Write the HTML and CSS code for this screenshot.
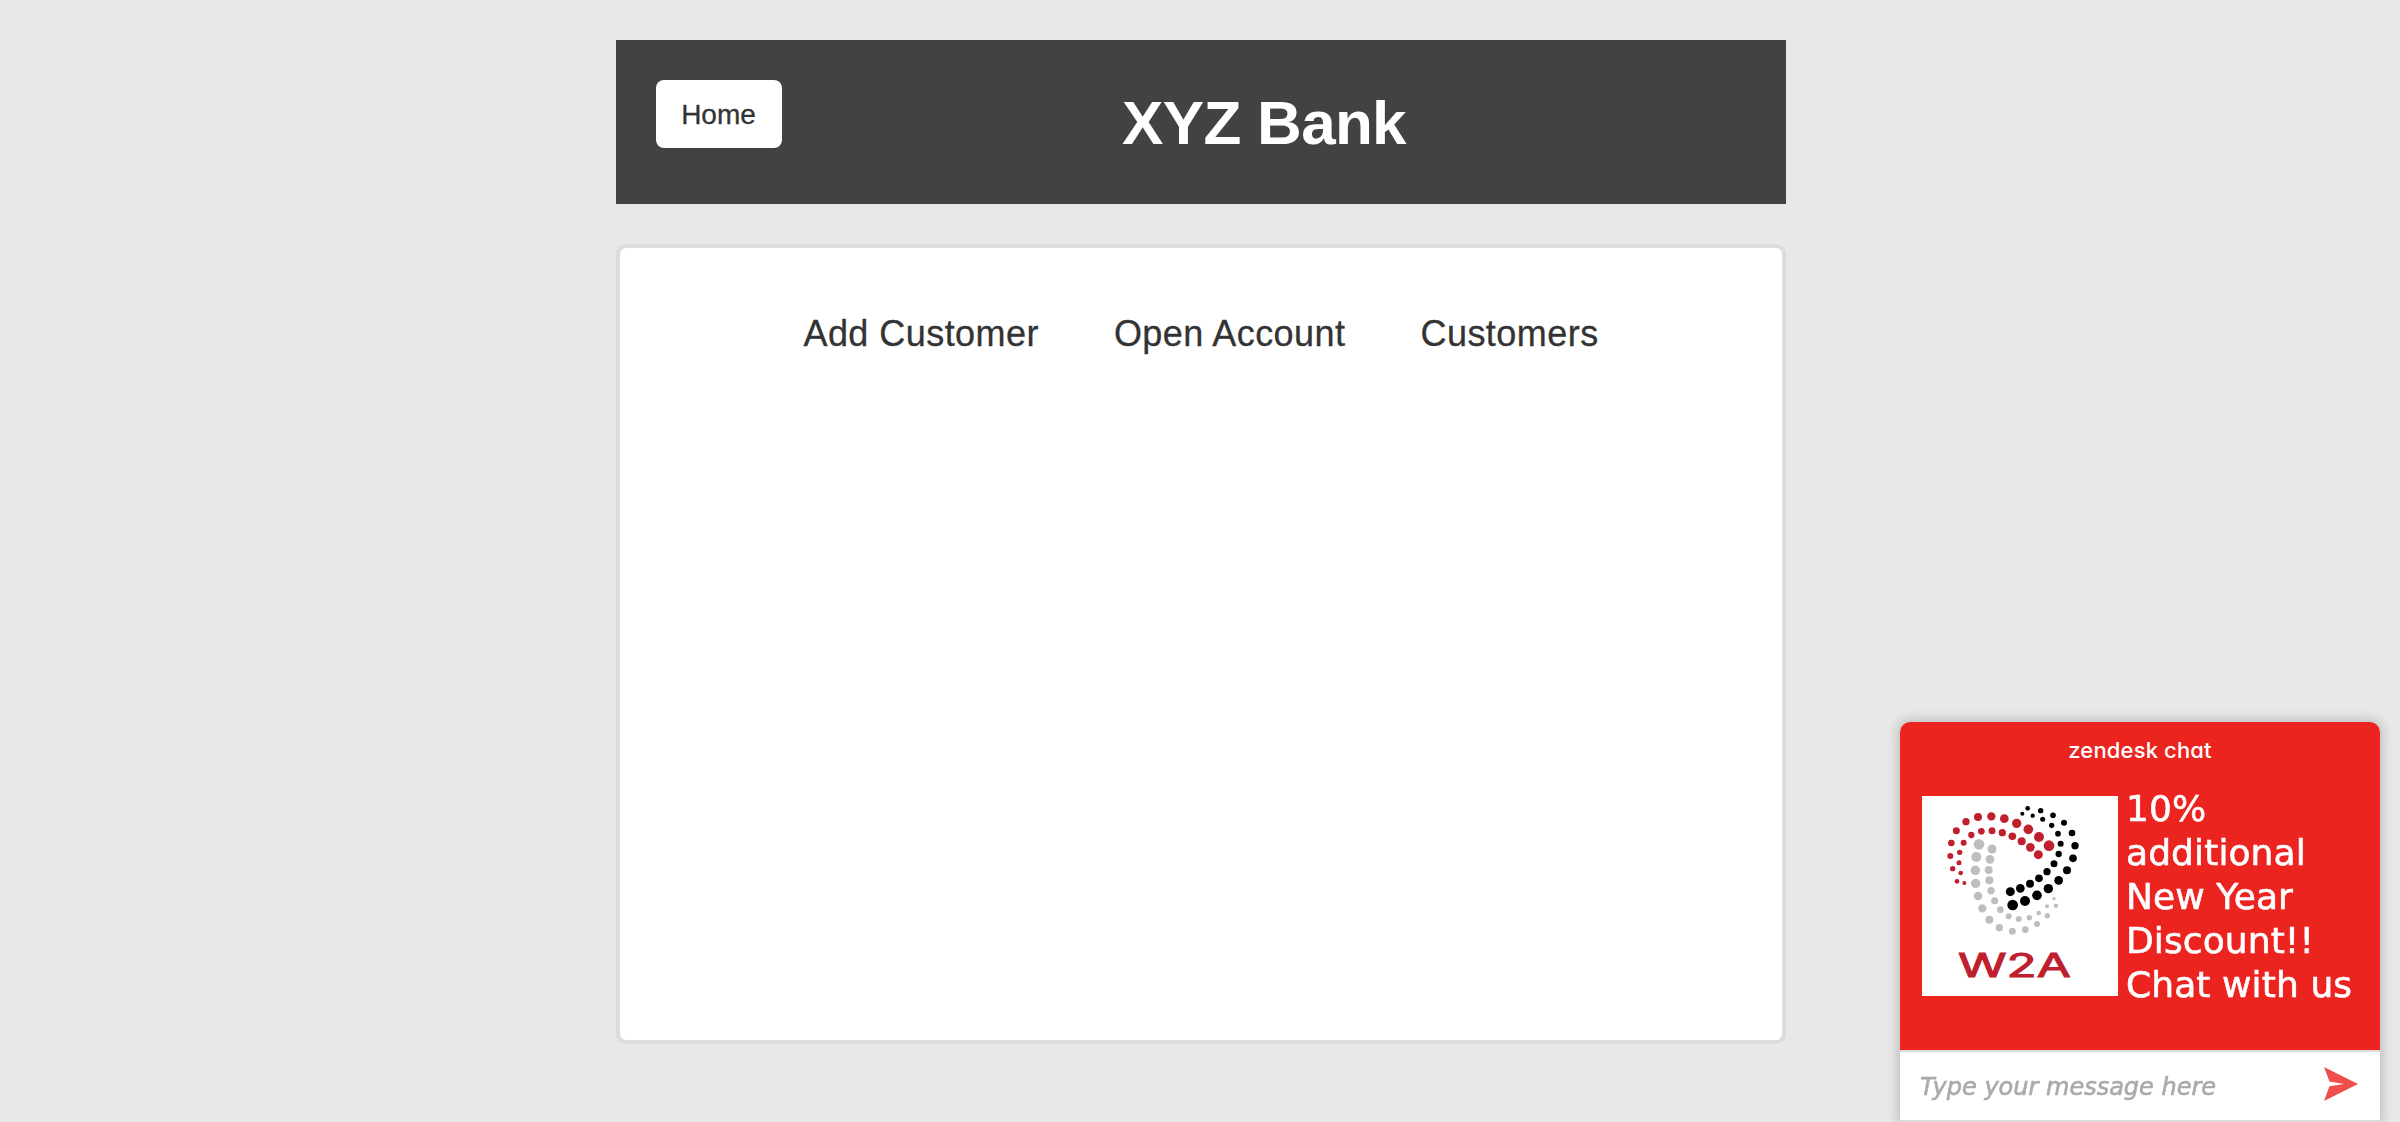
FILE: index.html
```html
<!DOCTYPE html>
<html lang="en">
<head>
<meta charset="utf-8">
<title>XYZ Bank</title>
<link rel="stylesheet" href="styles.css">
</head>
<body>
<div class="container">
  <header class="header">
    <button class="btn home" type="button">Home</button>
    <h1 class="title">XYZ Bank</h1>
  </header>
  <main class="panel">
    <nav class="tabs">
      <a class="tab add">Add Customer</a>
      <a class="tab open">Open Account</a>
      <a class="tab list">Customers</a>
    </nav>
  </main>
</div>
<aside class="chat">
  <div class="chat-top">
    <div class="brand">zendesk chat</div>
    <div class="promo">
      <svg class="logo" viewBox="36 33 588 600" aria-label="W2A">
        <g fill="#be202e">
          <circle cx="417" cy="182" r="16"/><circle cx="387" cy="156" r="15"/><circle cx="355" cy="133" r="14.5"/><circle cx="320" cy="115" r="14"/><circle cx="283" cy="101" r="13"/><circle cx="244" cy="94" r="12.5"/><circle cx="204" cy="96" r="12"/><circle cx="168" cy="110" r="11"/><circle cx="139" cy="137" r="10.5"/><circle cx="124" cy="174" r="10"/><circle cx="121" cy="213" r="9"/><circle cx="128" cy="251" r="8"/><circle cx="141" cy="289" r="7"/>
          <circle cx="385" cy="209" r="13.5"/><circle cx="361" cy="187" r="13"/><circle cx="335" cy="169" r="12"/><circle cx="307" cy="154" r="11.5"/><circle cx="277" cy="143" r="11"/><circle cx="246" cy="137" r="10.5"/><circle cx="214" cy="139" r="10"/><circle cx="184" cy="150" r="9.5"/><circle cx="161" cy="173" r="9"/><circle cx="149" cy="202" r="8"/><circle cx="147" cy="233" r="7.5"/><circle cx="152" cy="264" r="7"/><circle cx="163" cy="294" r="6"/>
        </g>
        <g fill="#000">
          <circle cx="308" cy="360" r="16"/><circle cx="345" cy="348" r="15"/><circle cx="381" cy="331" r="14.5"/><circle cx="415" cy="311" r="14"/><circle cx="446" cy="286" r="13"/><circle cx="471" cy="256" r="12"/><circle cx="489" cy="220" r="11.5"/><circle cx="495" cy="182" r="11"/><circle cx="486" cy="144" r="10"/><circle cx="462" cy="113" r="9"/><circle cx="429" cy="91" r="8.5"/><circle cx="392" cy="77" r="8"/><circle cx="353" cy="70" r="7"/>
          <circle cx="301" cy="320" r="13.5"/><circle cx="331" cy="310" r="13"/><circle cx="360" cy="296" r="12"/><circle cx="387" cy="280" r="11.5"/><circle cx="411" cy="260" r="11"/><circle cx="432" cy="236" r="10.5"/><circle cx="446" cy="207" r="9.5"/><circle cx="452" cy="176" r="9"/><circle cx="444" cy="146" r="8.5"/><circle cx="425" cy="121" r="8"/><circle cx="398" cy="103" r="7.5"/><circle cx="368" cy="92" r="6.5"/><circle cx="337" cy="86" r="6"/>
        </g>
        <g fill="#bcbec0">
          <circle cx="207" cy="178" r="16"/><circle cx="199" cy="216" r="15"/><circle cx="196" cy="256" r="14.5"/><circle cx="197" cy="295" r="14"/><circle cx="204" cy="333" r="13"/><circle cx="217" cy="370" r="12.5"/><circle cx="238" cy="404" r="12"/><circle cx="268" cy="428" r="11"/><circle cx="307" cy="439" r="10.5"/><circle cx="346" cy="434" r="10"/><circle cx="381" cy="417" r="9"/><circle cx="412" cy="392" r="8"/><circle cx="438" cy="362" r="6.5"/>
          <circle cx="246" cy="192" r="13.5"/><circle cx="240" cy="223" r="13"/><circle cx="236" cy="255" r="12"/><circle cx="238" cy="286" r="12"/><circle cx="243" cy="317" r="11"/><circle cx="254" cy="347" r="10.5"/><circle cx="271" cy="374" r="10"/><circle cx="296" cy="394" r="9"/><circle cx="326" cy="402" r="9"/><circle cx="358" cy="398" r="8"/><circle cx="386" cy="384" r="7"/><circle cx="411" cy="364" r="6"/><circle cx="432" cy="341" r="5"/>
        </g>
        <text class="logo-text" x="144" y="576" textLength="338" lengthAdjust="spacingAndGlyphs">W2A</text>
      </svg>
      <p class="offer">10% additional New Year Discount!! Chat with us</p>
    </div>
  </div>
  <div class="composer">
    <span class="hint">Type your message here</span>
    <svg class="send" viewBox="0 0 34 34" aria-hidden="true"><path fill="#ef4f4c" d="M0 0 34 17 0 34 5.5 19.2 20 17 5.5 14.6Z"/></svg>
  </div>
</aside>
</body>
</html>
```
FILE: styles.css
```css
* { box-sizing: border-box; }
body {
  margin: 0;
  height: 1122px;
  overflow: hidden;
  background: #e8e8e8;
  color: #333;
  font-family: "Liberation Sans", Arial, sans-serif;
}
.container {
  width: 1170px;
  margin-left: 616px;
  padding-top: 40px;
}
.header {
  display: flex;
  align-items: flex-start;
  height: 164px;
  padding: 40px;
  background: #424242;
}
.btn {
  width: 126px;
  height: 68px;
  padding: 1px 1px 0 0;
  border: 0;
  border-radius: 8px;
  background: #fff;
  color: #333;
  font: 28px/67px "Liberation Sans", Arial, sans-serif;
  -webkit-text-stroke: 0.3px;
}
.title {
  flex: 1;
  margin: 0;
  color: #fff;
  font-size: 62px;
  line-height: 85px;
  letter-spacing: -0.7px;
  text-align: center;
}
.panel {
  height: 800px;
  margin-top: 40px;
  padding: 61px 0;
  border: 4px solid #dcdcdc;
  border-radius: 10px;
  background: #fff;
}
.tabs {
  display: flex;
  justify-content: center;
  gap: 75px;
}
.tab {
  font-size: 36px;
  line-height: 50px;
  letter-spacing: 0.45px;
  white-space: nowrap;
  -webkit-text-stroke: 0.3px;
}
.chat {
  position: fixed;
  top: 722px;
  left: 1900px;
  width: 480px;
  height: 400px;
  border-radius: 10px 10px 0 0;
  background: #fff;
  box-shadow: 0 0 12px 2px rgba(0, 0, 0, 0.2);
  font-family: "DejaVu Sans", Verdana, sans-serif;
}
.chat-top {
  height: 328px;
  padding: 13px 22px 0;
  border-radius: 10px 10px 0 0;
  background: #ec2420;
  color: #fff;
}
.brand {
  height: 47px;
  font: 500 22px/30px Inter, sans-serif;
  font-feature-settings: "cv11";
  letter-spacing: 0.15px;
  text-align: center;
}
.promo {
  display: flex;
  align-items: flex-start;
  gap: 8px;
}
.logo {
  flex: none;
  width: 196px;
  height: 200px;
  margin-top: 14px;
  background: #fff;
}
.logo-text {
  fill: #be202e;
  stroke: #be202e;
  stroke-width: 3px;
  font: 96px Inter, sans-serif;
}
.offer {
  width: 232px;
  margin: 5px 0 0;
  font-size: 36px;
  line-height: 44px;
  letter-spacing: 0.1px;
  -webkit-text-stroke: 0.6px;
}
.composer {
  display: flex;
  justify-content: space-between;
  height: 72px;
  padding: 15px 22px 0 20px;
  border: solid #dcdcdc;
  border-width: 2px 0;
}
.hint {
  color: #aaa;
  font-size: 24px;
  font-style: italic;
  line-height: 41px;
  -webkit-text-stroke: 0.6px;
}
.send {
  width: 34px;
  height: 34px;
}
```
